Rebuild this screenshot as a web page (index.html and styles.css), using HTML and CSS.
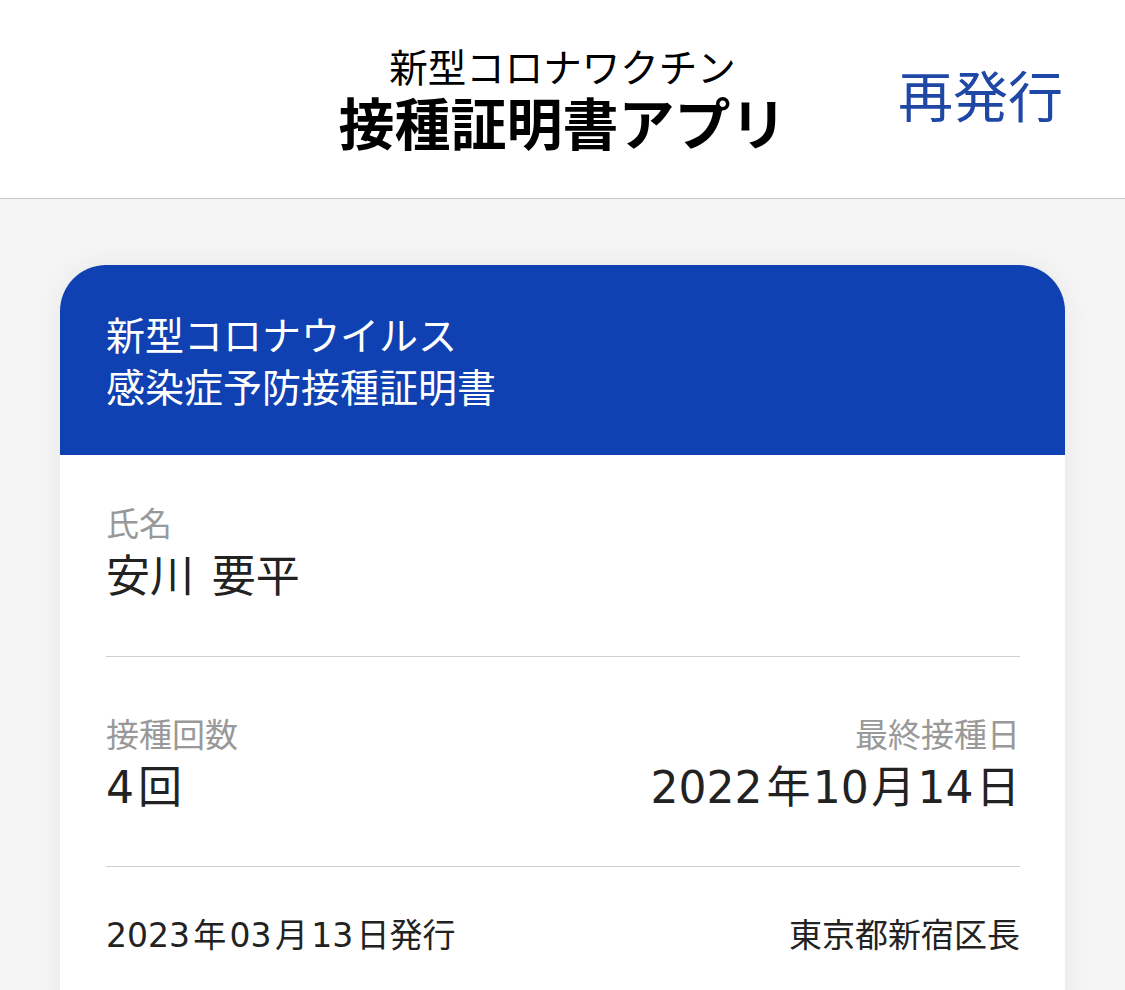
FILE: index.html
```html
<!DOCTYPE html>
<html lang="ja">
<head>
<meta charset="utf-8">
<title>接種証明書アプリ</title>
<link rel="stylesheet" href="styles.css">
</head>
<body>
<header class="topbar">
  <div class="topbar-side"></div>
  <div class="title">
    <div class="title-sub">新型コロナワクチン</div>
    <div class="title-main">接種証明書アプリ</div>
  </div>
  <div class="topbar-side topbar-right">
    <a class="reissue" href="#">再発行</a>
  </div>
</header>
<main class="page">
  <section class="card">
    <div class="card-head">
      <div class="card-head-line">新型コロナウイルス</div>
      <div class="card-head-line">感染症予防接種証明書</div>
    </div>
    <div class="card-body">
      <div class="row row-name">
        <div class="field">
          <div class="label">氏名</div>
          <div class="value value-name">安川 要平</div>
        </div>
      </div>
      <div class="row row-split">
        <div class="field">
          <div class="label">接種回数</div>
          <div class="value"><span class="num">4</span>回</div>
        </div>
        <div class="field field-right">
          <div class="label">最終接種日</div>
          <div class="value"><span class="num">2022</span>年<span class="num">10</span>月<span class="num">14</span>日</div>
        </div>
      </div>
      <div class="row row-foot">
        <div class="foot"><span class="num">2023</span>年<span class="num">03</span>月<span class="num">13</span>日発行</div>
        <div class="foot">東京都新宿区長</div>
      </div>
    </div>
  </section>
</main>
</body>
</html>
```

FILE: styles.css
```css
* { box-sizing: border-box; }
html, body {
  margin: 0;
  padding: 0;
}
body {
  width: 1125px;
  height: 990px;
  overflow: hidden;
  background: #f5f5f5;
  font-family: "Noto Sans CJK JP", "Noto Sans", sans-serif;
  color: #222;
}
.topbar {
  height: 199px;
  background: #fff;
  border-bottom: 1px solid #c9c9c9;
  display: grid;
  grid-template-columns: 1fr auto 1fr;
  align-items: center;
}
.title {
  text-align: center;
  color: #000;
}
.title-sub {
  font-size: 38.5px;
  line-height: 44px;
  font-weight: 400;
}
.title-main {
  font-size: 56px;
  line-height: 68px;
  font-weight: 700;
}
.topbar-right {
  display: flex;
  justify-content: flex-end;
  padding-right: 62px;
}
.reissue {
  color: #1f47a6;
  font-size: 55px;
  line-height: 64px;
  margin-bottom: 12px;
  text-decoration: none;
}
.page {
  padding: 66px 60px 0 60px;
}
.card {
  background: #fff;
  border-radius: 46px 46px 0 0;
  overflow: hidden;
  box-shadow: 0 0 30px rgba(0, 0, 0, 0.06);
}
.card-head {
  background: #1041b2;
  color: #fff;
  padding: 42px 46px 44px;
  font-size: 39px;
  line-height: 52px;
}
.card-body {
  padding: 0 45px 60px 46px;
}
.row {
  border-top: 1px solid #cfcfcf;
}
.row:first-child {
  border-top: none;
}
.row-name {
  padding: 45px 0 54px;
}
.row-split {
  display: flex;
  justify-content: space-between;
  padding: 54px 0 53px;
}
.row-foot {
  display: flex;
  justify-content: space-between;
  padding: 44px 0 40px;
}
.field-right {
  text-align: right;
}
.label {
  color: #999;
  font-size: 33px;
  line-height: 44px;
}
.value {
  color: #222;
  font-size: 44px;
  line-height: 58px;
}
.value-name {
  word-spacing: 8px;
}
.foot {
  color: #222;
  font-size: 33px;
  line-height: 44px;
}
.num {
  font-family: "DejaVu Sans", "Noto Sans CJK JP", sans-serif;
  line-height: 1;
  margin: 0 0.1em;
}
.value .num {
  margin: 0 0.055em;
}
.num:first-child {
  margin-left: 0;
}
.value .num:first-child {
  margin-left: 0;
  margin-right: 0.09em;
}
```
